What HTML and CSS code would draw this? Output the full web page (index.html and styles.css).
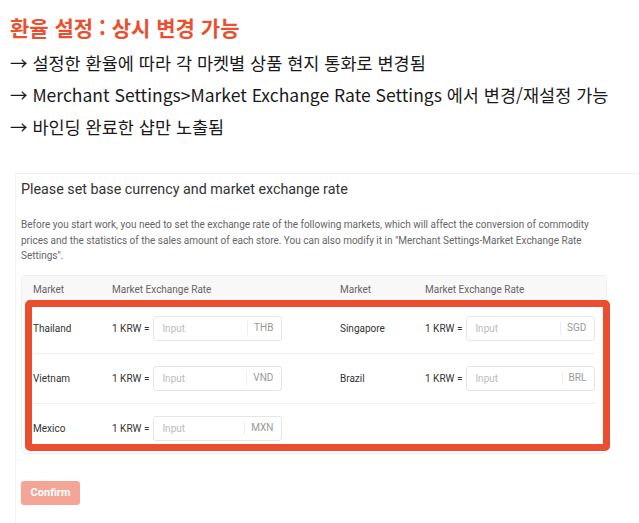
FILE: index.html
```html
<!DOCTYPE html>
<html lang="ko">
<head>
  <meta charset="UTF-8">
  <meta name="viewport" content="width=device-width, initial-scale=1.0">
  <title>환율 설정</title>
  <link rel="stylesheet" href="styles.css">
</head>
<body>
  <!-- 안내 문구 -->
  <section class="notes">
    <h1 class="notes-title">환율 설정 : 상시 변경 가능</h1>
    <p class="note-line">→ 설정한 환율에 따라 각 마켓별 상품 현지 통화로 변경됨</p>
    <p class="note-line">→ Merchant Settings&gt;Market Exchange Rate Settings 에서 변경/재설정 가능</p>
    <p class="note-line">→ 바인딩 완료한 샵만 노출됨</p>
  </section>

  <!-- 캡처 화면 -->
  <section class="capture">
    <h2 class="capture-title">Please set base currency and market exchange rate</h2>
    <p class="capture-desc">Before you start work, you need to set the exchange rate of the following markets, which will affect the conversion of commodity prices and the statistics of the sales amount of each store. You can also modify it in "Merchant Settings-Market Exchange Rate Settings".</p>

    <div class="rate-table">
      <div class="rate-head">
        <span>Market</span>
        <span>Market Exchange Rate</span>
        <span>Market</span>
        <span>Market Exchange Rate</span>
      </div>

      <div class="rate-row">
        <span class="market">Thailand</span>
        <div class="rate-cell">
          <span class="krw">1 KRW =</span>
          <div class="rate-input"><span class="ph">Input</span><span class="unit">THB</span></div>
        </div>
        <span class="market">Singapore</span>
        <div class="rate-cell">
          <span class="krw">1 KRW =</span>
          <div class="rate-input"><span class="ph">Input</span><span class="unit">SGD</span></div>
        </div>
      </div>

      <div class="rate-row">
        <span class="market">Vietnam</span>
        <div class="rate-cell">
          <span class="krw">1 KRW =</span>
          <div class="rate-input"><span class="ph">Input</span><span class="unit">VND</span></div>
        </div>
        <span class="market">Brazil</span>
        <div class="rate-cell">
          <span class="krw">1 KRW =</span>
          <div class="rate-input"><span class="ph">Input</span><span class="unit">BRL</span></div>
        </div>
      </div>

      <div class="rate-row last">
        <span class="market">Mexico</span>
        <div class="rate-cell">
          <span class="krw">1 KRW =</span>
          <div class="rate-input"><span class="ph">Input</span><span class="unit">MXN</span></div>
        </div>
        <span></span>
        <span></span>
      </div>

      <div class="highlight"></div>
    </div>

    <button class="confirm" type="button">Confirm</button>
  </section>
</body>
</html>
```

FILE: styles.css
```css
/* 기본 */
body {
  margin: 0;
  background: #fff;
  font-family: "Noto Sans CJK KR", "Liberation Sans", sans-serif;
  color: #1a1a1a;
}

/* 안내 문구 */
.notes {
  padding: 12px 10px 0;
}

.notes-title {
  margin: 0 0 5px;
  font-size: 21px;
  line-height: 30px;
  font-weight: bold;
  color: #e9502f;
}

.note-line {
  margin: 0;
  font-size: 17.5px;
  line-height: 32px;
  letter-spacing: 0;
}

/* 캡처 화면 */
.capture {
  margin: 30px 0 0 15px;
  padding: 0 0 20px 5px;
  border-top: 1px solid #f1f1f1;
  border-left: 1px solid #f3f3f3;
  font-family: Roboto, "Liberation Sans", sans-serif;
}

.capture-title {
  margin: 0;
  padding-top: 4px;
  font-size: 14.3px;
  line-height: 22px;
  font-weight: normal;
  color: #333;
}

.capture-desc {
  margin: 17px 0 0;
  width: 584px;
  font-size: 10px;
  line-height: 15.5px;
  color: #666;
}

.rate-table {
  position: relative;
  margin-top: 11px;
  width: 584px;
  border: 1px solid #efefef;
  border-radius: 4px;
}

.rate-head,
.rate-row {
  display: grid;
  grid-template-columns: 79px 228px 85px 1fr;
  align-items: center;
  font-size: 10px;
}

.rate-head {
  height: 28px;
  padding: 0 11px;
  background: #f8f8f8;
  color: #666;
}

.rate-row {
  height: 49px;
  margin: 0 11px;
  border-bottom: 1px solid #eee;
  color: #333;
}

.rate-row.last {
  border-bottom: none;
}

.rate-cell {
  display: flex;
  align-items: center;
  gap: 4px;
}

.krw {
  white-space: nowrap;
}

.rate-input {
  display: flex;
  align-items: center;
  width: 127px;
  height: 23px;
  border: 1px solid #e6e6e6;
  border-radius: 3px;
  background: #fff;
}

.ph {
  flex: 1;
  padding-left: 8px;
  color: #bbb;
}

.unit {
  padding: 0 8px 0 6px;
  border-left: 1px solid #eee;
  line-height: 14px;
  color: #999;
}

/* 빨간 강조 박스 */
.highlight {
  position: absolute;
  left: 3px;
  right: -4px;
  top: 24px;
  bottom: 2px;
  border: 7px solid #e94e2f;
  border-radius: 5px;
}

.confirm {
  margin-top: 27px;
  width: 59px;
  height: 24px;
  border: none;
  border-radius: 3px;
  background: #f5a596;
  color: #fff;
  font-family: Roboto, "Liberation Sans", sans-serif;
  font-size: 11px;
  font-weight: bold;
}
```
